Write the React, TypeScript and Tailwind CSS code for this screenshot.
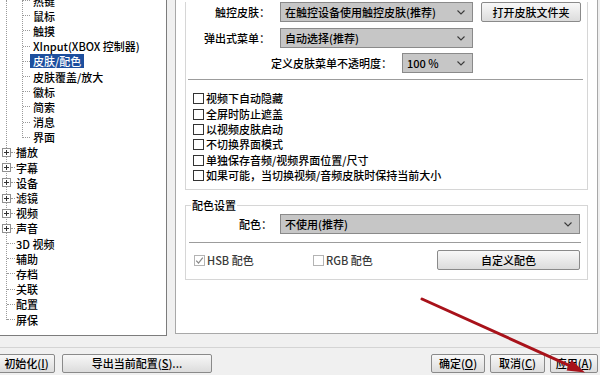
import React from 'react';

type Node = { level: 1 | 2; text: string; plus?: boolean; selected?: boolean };

const tree: Node[] = [
  { level: 2, text: '热键' },
  { level: 2, text: '鼠标' },
  { level: 2, text: '触摸' },
  { level: 2, text: 'XInput(XBOX 控制器)' },
  { level: 2, text: '皮肤/配色', selected: true },
  { level: 2, text: '皮肤覆盖/放大' },
  { level: 2, text: '徽标' },
  { level: 2, text: '简索' },
  { level: 2, text: '消息' },
  { level: 2, text: '界面' },
  { level: 1, text: '播放', plus: true },
  { level: 1, text: '字幕', plus: true },
  { level: 1, text: '设备', plus: true },
  { level: 1, text: '滤镜', plus: true },
  { level: 1, text: '视频', plus: true },
  { level: 1, text: '声音', plus: true },
  { level: 1, text: '3D 视频' },
  { level: 1, text: '辅助' },
  { level: 1, text: '存档' },
  { level: 1, text: '关联' },
  { level: 1, text: '配置' },
  { level: 1, text: '屏保' },
];

const options = [
  '视频下自动隐藏',
  '全屏时防止遮盖',
  '以视频皮肤启动',
  '不切换界面模式',
  '单独保存音频/视频界面位置/尺寸',
  '如果可能，当切换视频/音频皮肤时保持当前大小',
];

function PlusBox() {
  return (
    <svg width="9" height="9" viewBox="0 0 9 9" className="shrink-0">
      <rect x="0.5" y="0.5" width="8" height="8" fill="#fff" stroke="#919191" />
      <line x1="2" y1="4.5" x2="7" y2="4.5" stroke="#333" />
      <line x1="4.5" y1="2" x2="4.5" y2="7" stroke="#333" />
    </svg>
  );
}

function TreeRow({ node }: { node: Node }) {
  if (node.level === 2) {
    return (
      <div className="flex h-[15.2px] items-center">
        <span className="ml-[23px] w-[7px] border-t border-dotted border-[#9a9a9a]" />
        <span className={`px-[3px] leading-[14px] ${node.selected ? 'bg-[#1d4f9e] text-white' : ''}`}>{node.text}</span>
      </div>
    );
  }
  return (
    <div className="flex h-[15.2px] items-center">
      {node.plus ? (
        <>
          <span className="ml-[2px]">
            <PlusBox />
          </span>
          <span className="w-[4px] border-t border-dotted border-[#9a9a9a]" />
        </>
      ) : (
        <span className="ml-[7px] w-[8px] border-t border-dotted border-[#9a9a9a]" />
      )}
      <span className="ml-[1px] leading-[14px]">{node.text}</span>
    </div>
  );
}

function Tree() {
  return (
    <div className="relative h-[336px] w-[167px] shrink-0 overflow-hidden border-r border-b border-[#7c7c7c] bg-white">
      {/* guide lines */}
      <span className="absolute top-0 left-[6px] h-[320px] border-l border-dotted border-[#9a9a9a]" />
      <span className="absolute top-0 left-[22px] h-[138px] border-l border-dotted border-[#9a9a9a]" />
      <div className="relative -mt-[7px]">
        {tree.map(n => (
          <TreeRow key={n.text} node={n} />
        ))}
      </div>
    </div>
  );
}

function Chevron() {
  return (
    <svg width="8" height="5" viewBox="0 0 8 5" className="shrink-0">
      <polyline points="0.5,0.5 4,4 7.5,0.5" fill="none" stroke="#3a3a3a" strokeWidth="1.1" />
    </svg>
  );
}

function Select({ text, className }: { text: string; className: string }) {
  return (
    <div className={`flex h-[20px] items-center justify-between border border-[#8a8a8a] bg-[#c6c6c6] pr-[7px] pl-[4px] ${className}`}>
      <span className="leading-none">{text}</span>
      <Chevron />
    </div>
  );
}

function Button({ children, className }: { children: React.ReactNode; className: string }) {
  return (
    <button
      type="button"
      className={`flex items-center justify-center rounded-[2px] border border-[#8a8a8a] bg-linear-to-b from-[#f8f8f8] to-[#dcdcdc] leading-none ${className}`}>
      {children}
    </button>
  );
}

function CheckBox({ checked, disabled }: { checked?: boolean; disabled?: boolean }) {
  return (
    <span
      className={`flex h-[11px] w-[11px] shrink-0 items-center justify-center border bg-white ${
        disabled ? 'border-[#b4b4b4]' : 'border-[#333]'
      }`}>
      {checked && (
        <svg width="9" height="9" viewBox="0 0 9 9">
          <polyline points="1.2,4.6 3.5,7 7.8,1.6" fill="none" stroke="#8a8a8a" strokeWidth="1.2" />
        </svg>
      )}
    </span>
  );
}

function SkinPanel() {
  return (
    <div className="ml-[8px] h-[334px] w-[423px] shrink-0 border-r border-b border-l border-[#a8a8a8] bg-white px-[9px]">
      {/* skin group */}
      <div className="h-[188px] border-r border-b border-l border-[#d6d6d6]">
        <div className="mt-[2px] flex items-center">
          <span className="w-[84px] text-right">触控皮肤：</span>
          <Select text="在触控设备使用触控皮肤(推荐)" className="ml-[10px] w-[193px]" />
          <Button className="ml-[8px] h-[20px] w-[100px]">打开皮肤文件夹</Button>
        </div>
        <div className="mt-[6px] flex items-center">
          <span className="w-[84px] text-right">弹出式菜单：</span>
          <Select text="自动选择(推荐)" className="ml-[10px] w-[193px]" />
        </div>
        <div className="mt-[5px] flex items-center">
          <span className="w-[206px] text-right">定义皮肤菜单不透明度：</span>
          <Select text="100 %" className="ml-[10px] w-[71px]" />
        </div>
        <div className="mt-[6px] ml-[2px] h-px w-[395px] bg-[#9c9c9c]" />
        <div className="mt-[11px]">
          {options.map(o => (
            <div key={o} className="flex h-[15.4px] items-center pl-[7px]">
              <CheckBox />
              <span className="ml-[2px] leading-none">{o}</span>
            </div>
          ))}
        </div>
      </div>

      {/* colour group */}
      <fieldset className="mt-[8px] border border-[#d6d6d6] pb-[9px]">
        <legend className="ml-[5px] px-[1px] leading-[14px]">配色设置</legend>
        <div className="mt-[2px] flex items-center">
          <span className="w-[86px] text-right">配色：</span>
          <Select text="不使用(推荐)" className="ml-[8px] w-[300px]" />
        </div>
        <div className="mt-[8px] ml-[3px] h-px w-[392px] bg-[#9c9c9c]" />
        <div className="mt-[7px] flex h-[20px] items-center">
          <div className="flex w-[127px] items-center pl-[8px]">
            <CheckBox checked disabled />
            <span className="ml-[2px] leading-none text-[#3a3a3a]">HSB 配色</span>
          </div>
          <div className="flex w-[124px] items-center">
            <CheckBox disabled />
            <span className="ml-[2px] leading-none text-[#3a3a3a]">RGB 配色</span>
          </div>
          <Button className="h-[20px] w-[143px]">自定义配色</Button>
        </div>
      </fieldset>
    </div>
  );
}

export default function App() {
  return (
    <div className="relative h-[375px] w-[600px] overflow-hidden bg-[#f0f0f0] font-['Noto_Sans_CJK_SC','Noto_Sans',sans-serif] text-[11px] font-medium text-black">
      <div className="flex h-[336px] items-start">
        <Tree />
        <SkinPanel />
      </div>

      <div className="mt-[11px] h-px bg-[#d4d4d4]" />

      <div className="mt-[6px] flex items-center">
        <Button className="-ml-[2px] h-[19px] w-[57px]">
          初始化(<span className="underline">I</span>)
        </Button>
        <Button className="ml-[7px] h-[19px] w-[150px]">
          导出当前配置(<span className="underline">S</span>)...
        </Button>
        <Button className="ml-auto h-[19px] w-[54px]">
          确定(<span className="underline">O</span>)
        </Button>
        <Button className="ml-[5px] h-[19px] w-[55px]">
          取消(<span className="underline">C</span>)
        </Button>
        <Button className="mr-[2px] ml-[5px] h-[19px] w-[48px]">
          应用(<span className="underline">A</span>)
        </Button>
      </div>

      {/* red annotation arrow */}
      <svg className="pointer-events-none absolute inset-0" width="600" height="375" viewBox="0 0 600 375">
        <line x1="422" y1="299" x2="570" y2="365.8" stroke="#a8121a" strokeWidth="3" strokeLinecap="round" />
        <polygon points="585,372.5 566.6,370.6 571.4,359.9" fill="#a8121a" />
      </svg>
    </div>
  );
}
